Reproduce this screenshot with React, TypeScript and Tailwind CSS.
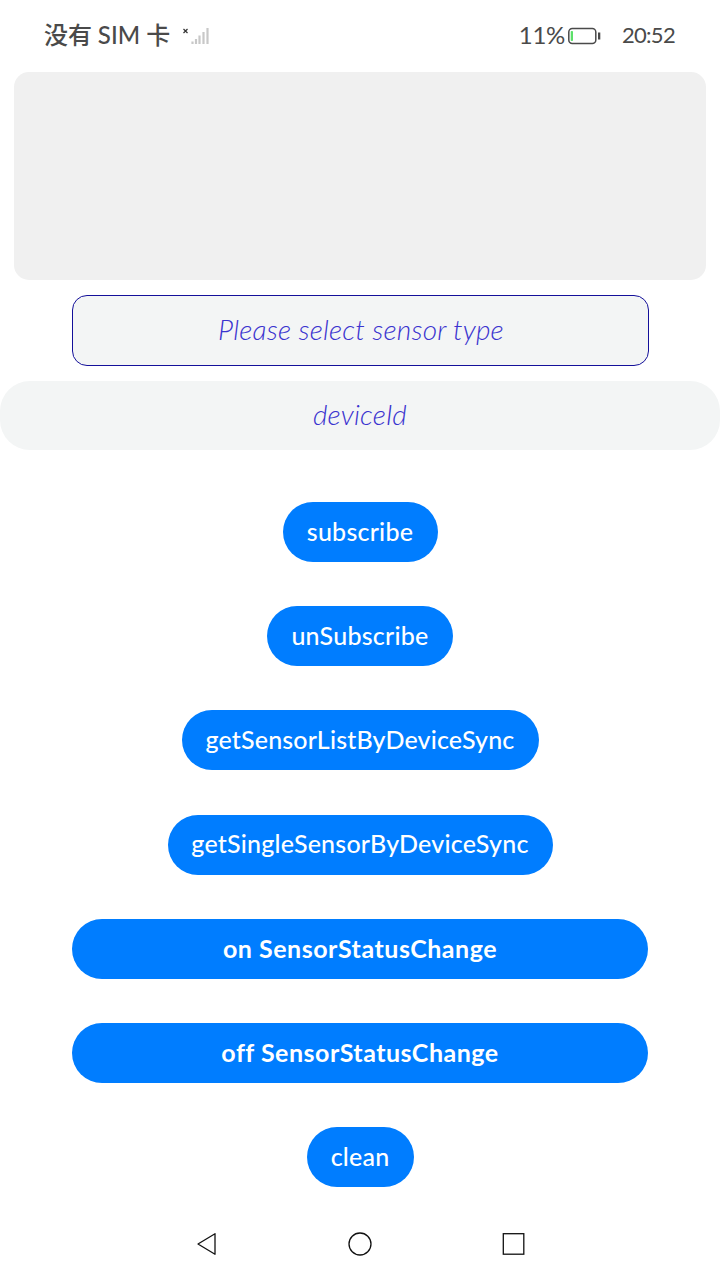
const actions = [
  { label: "subscribe", box: "w-[155px] font-medium", text: "tracking-[0.24px]" },
  { label: "unSubscribe", box: "w-[186px] font-medium", text: "tracking-[0.25px]" },
  { label: "getSensorListByDeviceSync", box: "w-[357px] font-medium", text: "tracking-[0.17px]" },
  { label: "getSingleSensorByDeviceSync", box: "w-[385px] font-medium", text: "tracking-[0.22px]" },
  { label: "on SensorStatusChange", box: "w-[576px] font-bold", text: "tracking-[0.52px]" },
  { label: "off SensorStatusChange", box: "w-[576px] font-bold", text: "tracking-[0.5px]" },
  { label: "clean", box: "w-[107px] font-medium", text: "tracking-[0.2px]" },
];

function StatusBar() {
  return (
    <header className="flex h-[72px] items-center pl-11 pr-[46px] text-[#4a4a4a]">
      <span className="w-[138px] whitespace-nowrap pb-0.5 font-['Lato','Noto_Sans_CJK_SC',sans-serif] text-[24px] font-medium leading-8 tracking-[-0.1px]">
        没有 <span className="tracking-[0.1px]">SIM</span> 卡
      </span>
      <svg width="28" height="20" viewBox="0 0 28 20" fill="none">
        <path d="M1.500 3l4 4M5.500 3l-4 4" stroke="#333" strokeWidth="1.200" />
        <path d="M10.500 15.500v2.500M14 13v5M17.500 9.500v8.500M21.500 6v12M25.500 2v16" stroke="#c8c8c8" strokeWidth="2.200" />
      </svg>
      <div className="ml-auto flex items-center">
        <span className="pb-0.5 font-['Lato',sans-serif] text-[24px] leading-8 tracking-[-0.3px]">11%</span>
        <svg className="ml-[3px]" width="33" height="18" viewBox="0 0 33 18" fill="none">
          <rect x="0.800" y="1.500" width="27" height="15" rx="3.500" stroke="#4a4a4a" strokeWidth="1.500" />
          <rect x="2.700" y="4" width="2.300" height="10" rx="0.800" fill="#5ce06a" />
          <rect x="30" y="5.500" width="2.300" height="7" fill="#4a4a4a" />
        </svg>
        <span className="-mr-px ml-[21px] pb-0.5 font-['Lato',sans-serif] text-[22px] leading-8 tracking-[-0.7px]">20:52</span>
      </div>
    </header>
  );
}

function NavigationBar() {
  return (
    <nav className="mt-auto flex h-[72px] items-center justify-center gap-[129px] text-[#111]">
      <svg width="24" height="26" viewBox="0 0 24 26" fill="none" stroke="currentColor" strokeWidth="1.300" strokeLinejoin="round">
        <path d="M21 2.700v20.600L4 13z" />
      </svg>
      <svg width="26" height="26" viewBox="0 0 26 26" fill="none" stroke="currentColor" strokeWidth="1.300">
        <circle cx="13" cy="13" r="11" />
      </svg>
      <svg width="24" height="26" viewBox="0 0 24 26" fill="none" stroke="currentColor" strokeWidth="1.300">
        <rect x="1.300" y="2.700" width="20.500" height="20.500" />
      </svg>
    </nav>
  );
}

export default function App() {
  return (
    <div className="flex h-[1280px] w-[720px] flex-col overflow-hidden bg-white font-['Lato',sans-serif]">
      <StatusBar />
      <main className="flex flex-col items-center">
        <section className="h-[208px] w-[692px] rounded-[15px] bg-[#f0f0f0]" />
        <button className="mt-[15px] flex h-[71px] w-[577px] items-center justify-center rounded-[15px] border border-[#14109a] bg-[#f3f5f5] pb-[3px] text-[28px] font-light italic text-[#3a33cf]">
          <span className="whitespace-nowrap pl-0.5 tracking-[0.2px]">Please select sensor type</span>
        </button>
        <button className="mt-[15px] flex h-[69px] w-full items-center justify-center rounded-[30px] bg-[#f3f5f5] pb-[3px] text-[28px] font-light italic text-[#3a33cf]">
          <span className="tracking-[0.2px]">deviceId</span>
        </button>
        <div className="mt-[52px] flex flex-col items-center gap-[44.200px]">
          {actions.map(({ label, box, text }) => (
            <button key={label} className={`flex h-[60px] items-center justify-center rounded-full bg-[#007dff] pb-px text-[25px] text-white ${box}`}>
              <span className={`whitespace-nowrap ${text}`}>{label}</span>
            </button>
          ))}
        </div>
      </main>
      <NavigationBar />
    </div>
  );
}
